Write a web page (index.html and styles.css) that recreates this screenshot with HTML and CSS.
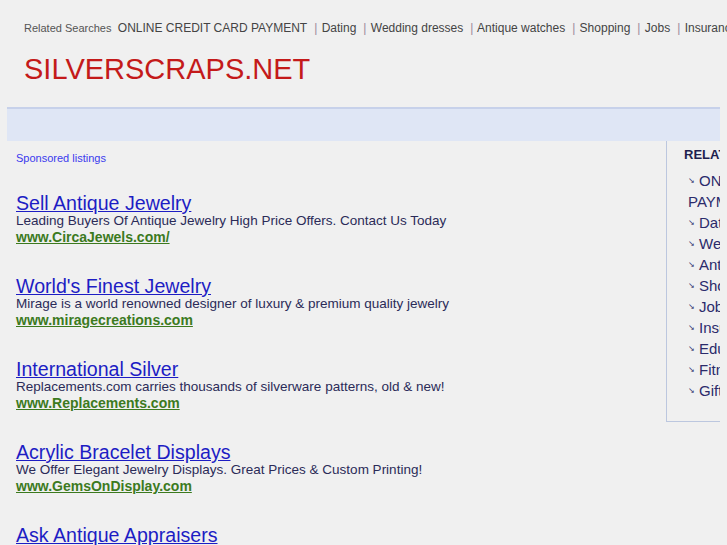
FILE: index.html
```html
<!DOCTYPE html>
<html lang="en">
<head>
    <meta charset="UTF-8">
    <title>silverscraps.net</title>
    <link rel="stylesheet" href="styles.css">
</head>
<body>
    <div class="page">
        <div class="top">
            <span class="top-label">Related Searches</span>
            <a href="#">ONLINE CREDIT CARD PAYMENT</a><span class="sep">|</span>
            <a href="#">Dating</a><span class="sep">|</span>
            <a href="#">Wedding dresses</a><span class="sep">|</span>
            <a href="#">Antique watches</a><span class="sep">|</span>
            <a href="#">Shopping</a><span class="sep">|</span>
            <a href="#">Jobs</a><span class="sep">|</span>
            <a href="#">Insurance</a>
        </div>

        <h1 class="logo">SILVERSCRAPS.NET</h1>

        <div class="band"></div>

        <div class="content">
            <div class="main">
                <div class="sponsored">Sponsored listings</div>

                <div class="ad">
                    <a class="ad-title" href="#">Sell Antique Jewelry</a>
                    <div class="ad-desc">Leading Buyers Of Antique Jewelry High Price Offers. Contact Us Today</div>
                    <a class="ad-url" href="#">www.CircaJewels.com/</a>
                </div>

                <div class="ad">
                    <a class="ad-title" href="#">World's Finest Jewelry</a>
                    <div class="ad-desc">Mirage is a world renowned designer of luxury &amp; premium quality jewelry</div>
                    <a class="ad-url" href="#">www.miragecreations.com</a>
                </div>

                <div class="ad">
                    <a class="ad-title" href="#">International Silver</a>
                    <div class="ad-desc">Replacements.com carries thousands of silverware patterns, old &amp; new!</div>
                    <a class="ad-url" href="#">www.Replacements.com</a>
                </div>

                <div class="ad">
                    <a class="ad-title" href="#">Acrylic Bracelet Displays</a>
                    <div class="ad-desc">We Offer Elegant Jewelry Displays. Great Prices &amp; Custom Printing!</div>
                    <a class="ad-url" href="#">www.GemsOnDisplay.com</a>
                </div>

                <div class="ad">
                    <a class="ad-title" href="#">Ask Antique Appraisers</a>
                    <div class="ad-desc">Antique Appraisers Are Online Now. Ask a Question, Get an Answer ASAP.</div>
                    <a class="ad-url" href="#">JustAnswer.com/Antiques</a>
                </div>
            </div>

            <div class="side">
                <div class="side-title">RELATED SEARCHES</div>
                <ul class="side-list">
                    <li><a href="#">ONLINE CREDIT CARD PAYMENT</a></li>
                    <li><a href="#">Dating</a></li>
                    <li><a href="#">Wedding dresses</a></li>
                    <li><a href="#">Antique watches</a></li>
                    <li><a href="#">Shopping</a></li>
                    <li><a href="#">Jobs</a></li>
                    <li><a href="#">Insurance</a></li>
                    <li><a href="#">Education</a></li>
                    <li><a href="#">Fitness</a></li>
                    <li><a href="#">Gifts</a></li>
                </ul>
            </div>
        </div>
    </div>
</body>
</html>
```

FILE: styles.css
```css
body {
    margin: 0;
    background-color: #f0f0f0;
    font-family: "Liberation Sans", Arial, sans-serif;
    overflow: hidden;
}

.page {
    width: 713px;
    padding: 0 7px;
}

.top {
    padding: 21px 0 0 17px;
    height: 16px;
    white-space: nowrap;
    font-size: 12px;
    color: #555;
}

.top-label {
    font-size: 11px;
    color: #555;
    margin-right: 3px;
}

.top a {
    color: #444;
    text-decoration: none;
}

.sep {
    color: #9a8a9a;
    margin: 0 1px 0 7px;
}

.logo {
    margin: 15px 0 0 17px;
    font-size: 29px;
    font-weight: normal;
    line-height: 34px;
    color: #c41a1a;
}

.band {
    margin-top: 21px;
    height: 32px;
    background-color: #dfe6f5;
    border-top: 2px solid #c7d1ea;
}

.content {
    display: flex;
    overflow: hidden;
}

.main {
    flex: none;
    width: 650px;
    padding-left: 9px;
}

.sponsored {
    margin-top: 11px;
    font-size: 11px;
    color: #3a3aee;
}

.ad {
    margin-top: 30px;
    height: 53px;
}

.ad + .ad {
    margin-top: 30px;
}

.ad-title {
    display: block;
    width: max-content;
    font-size: 19.6px;
    line-height: 18px;
    color: #1d1dc4;
}

.ad-desc {
    font-size: 13.5px;
    line-height: 17px;
    color: #2b2b58;
}

.ad-url {
    display: block;
    width: max-content;
    font-size: 14px;
    line-height: 17px;
    font-weight: bold;
    color: #3c7a1e;
}

.side {
    flex: none;
    width: 190px;
    height: 280px;
    border-left: 1px solid #bcc7df;
    border-bottom: 1px solid #bcc7df;
    padding-left: 17px;
}

.side-title {
    margin-top: 6px;
    font-size: 13px;
    font-weight: bold;
    color: #1e1e4e;
}

.side-list {
    list-style: none;
    margin: 8px 0 0 4px;
    padding: 0;
}

.side-list li {
    font-size: 15px;
    line-height: 21px;
}

.side-list li::before {
    content: "\2198";
    font-size: 8px;
    color: #2b2b6b;
    margin-right: 4px;
    vertical-align: 3px;
}

.side-list a {
    color: #2b2b6b;
    text-decoration: none;
}
```
